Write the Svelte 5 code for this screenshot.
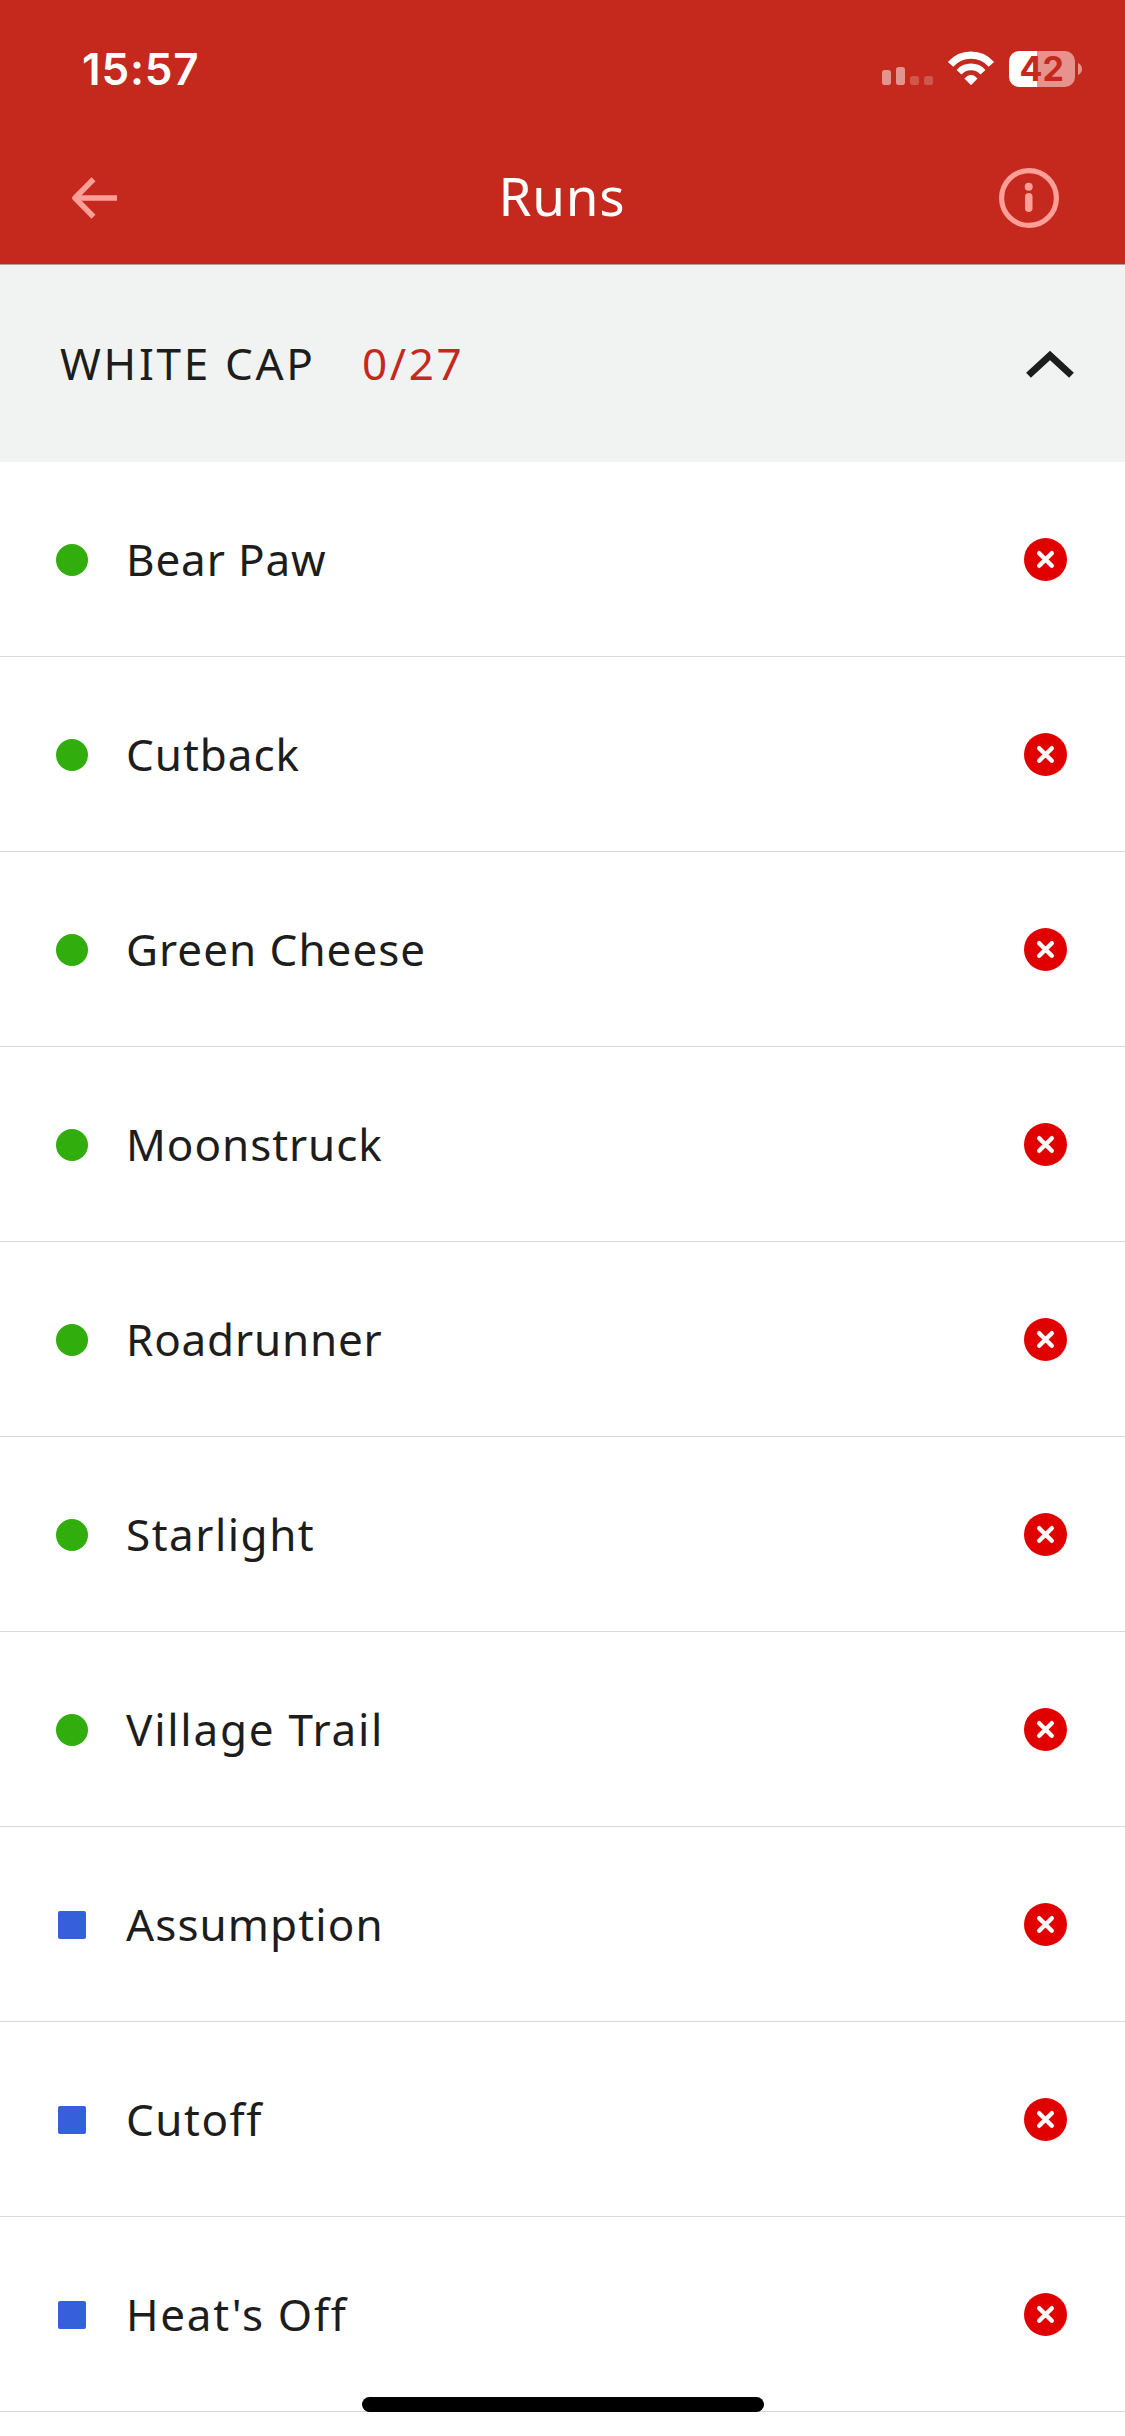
<script>
  // `tracking` is the letter spacing of each run name, in pixels
  const runs = [
    { name: 'Bear Paw', level: 'easy', tracking: 0.85 },
    { name: 'Cutback', level: 'easy', tracking: 0.95 },
    { name: 'Green Cheese', level: 'easy', tracking: 1 },
    { name: 'Moonstruck', level: 'easy', tracking: 0.95 },
    { name: 'Roadrunner', level: 'easy', tracking: 0.8 },
    { name: 'Starlight', level: 'easy', tracking: 1.5 },
    { name: 'Village Trail', level: 'easy', tracking: 1.75 },
    { name: 'Assumption', level: 'medium', tracking: 1.1 },
    { name: 'Cutoff', level: 'medium', tracking: 1.5 },
    { name: "Heat's Off", level: 'medium', tracking: 1.7 }
  ];
</script>

<div class="screen">
  <header>
    <div class="status">
      <span class="time">15:57</span>
      <svg class="indicators" width="202" height="40" viewBox="881 49 202 40">
        <g fill="#fff">
          <rect x="882" y="70" width="9" height="15" rx="2.8" opacity=".5" />
          <rect x="896" y="67" width="9" height="18" rx="2.8" opacity=".5" />
          <rect x="910" y="76" width="9" height="9" rx="2.8" opacity=".22" />
          <rect x="924" y="76" width="9" height="9" rx="2.8" opacity=".22" />
        </g>
        <g fill="none" stroke="#fff">
          <path stroke-width="7.2" d="M950.6 64.3A27.2 27.2 0 0 1 991.4 64.3" />
          <path stroke-width="6.6" d="M959 72.2A16.2 16.2 0 0 1 983 72.2" />
        </g>
        <path fill="#fff" d="M964.4 78.4Q971 71.2 977.6 78.4L971.7 84.6Q971 85.3 970.3 84.6Z" />
        <path fill="#e6938d" d="M1037 51h28a10 10 0 0 1 10 10v16a10 10 0 0 1-10 10h-28z" />
        <path fill="#fff" d="M1037 51h-18a10 10 0 0 0-10 10v16a10 10 0 0 0 10 10h18z" />
        <path fill="#e6938d" d="M1078 63q4 1.8 4 6t-4 6z" />
        <text class="level" x="1019.5" y="81.3">42</text>
      </svg>
    </div>
    <nav>
      <svg width="48" height="48" viewBox="71 174 48 48" fill="none" stroke="#ff9f97" stroke-width="5.6">
        <path d="M93.5 179.2L75 198l18.500 18.800" stroke-linejoin="round" />
        <path d="M76 198h41" />
      </svg>
      <h1>Runs</h1>
      <svg width="60" height="60" viewBox="0 0 60 60">
        <circle cx="30" cy="30" r="27.400" fill="none" stroke="#ff9f97" stroke-width="5.2" />
        <circle cx="29.700" cy="18.800" r="4" fill="#ff9f97" />
        <rect x="26" y="25" width="7.500" height="19" rx="3.750" fill="#ff9f97" />
      </svg>
    </nav>
  </header>

  <section class="area">
    <span class="area-name">WHITE CAP</span>
    <span class="count">0/27</span>
    <svg width="50" height="32" viewBox="0 0 50 32" fill="none" stroke="#1c1d1c" stroke-width="7">
      <path d="M3.500 27.200L25 7.400l21.500 19.800" />
    </svg>
  </section>

  <ul>
    {#each runs as run}
      <li>
        <span class="marker"><i class={run.level}></i></span>
        <span class="name" style="letter-spacing: {run.tracking}px">{run.name}</span>
        <svg width="43" height="43" viewBox="0 0 43 43">
          <circle cx="21.500" cy="21.500" r="21.500" fill="#e00000" />
          <path d="M15.200 15.200l12.600 12.600M27.800 15.200L15.200 27.800" stroke="#fff" stroke-width="4.4" stroke-linecap="round" />
        </svg>
      </li>
    {/each}
  </ul>
  <div class="home"></div>
</div>

<style>
  :global(body) { margin: 0; background: #fff; }
  .screen {
    position: relative;
    width: 1125px;
    height: 2436px;
    overflow: hidden;
    background: #fff;
    color: #1c1d1c;
    font-family: "Noto Sans", sans-serif;
    font-size: 44px;
  }
  header {
    box-sizing: border-box;
    height: 265px;
    background: #c5281c;
    border-bottom: 1px solid #b79d99;
  }
  .status {
    display: flex;
    align-items: center;
    justify-content: space-between;
    height: 138px;
    padding: 0 42px 0 82px;
    color: #fff;
  }
  .time {
    font: 600 44px Inter, sans-serif;
    letter-spacing: 0.8px;
  }
  .level {
    font: 700 34px Inter, sans-serif;
    fill: #c5281c;
  }
  nav {
    display: grid;
    grid-template-columns: 1fr auto 1fr;
    align-items: center;
    height: 120px;
    padding: 0 66px 0 71px;
  }
  nav svg:last-child { justify-self: end; }
  h1 {
    margin: 0;
    padding: 0 6px 4px 0;
    color: #fff;
    font-size: 53px;
    font-weight: 400;
    line-height: 72px;
    letter-spacing: 0.8px;
  }
  .area {
    display: flex;
    align-items: center;
    height: 197px;
    box-sizing: border-box;
    padding: 0 50px 0 60px;
    background: #f1f3f2;
  }
  .area-name,
  .count { padding-bottom: 2px; }
  .area-name { width: 302px; letter-spacing: 2.7px; white-space: nowrap; }
  .count { color: #c5281c; letter-spacing: 2.6px; }
  .area svg { margin-left: auto; }
  ul { margin: 0; padding: 0; list-style: none; }
  li {
    box-sizing: border-box;
    display: flex;
    align-items: center;
    height: 195px;
    padding: 0 58px 0 56px;
    border-bottom: 1px solid #d8d9d9;
  }
  .marker { display: flex; justify-content: center; width: 32px; margin-right: 38px; padding-top: 2px; }
  .marker i { display: block; width: 32px; height: 32px; border-radius: 50%; background: #31ae0e; }
  .marker .medium { width: 28px; height: 28px; border-radius: 2px; background: #3560db; }
  .name { flex: 1; white-space: nowrap; }
  .home {
    position: absolute;
    left: 362px;
    bottom: 24px;
    width: 402px;
    height: 15px;
    border-radius: 8px;
    background: #000;
  }
</style>
